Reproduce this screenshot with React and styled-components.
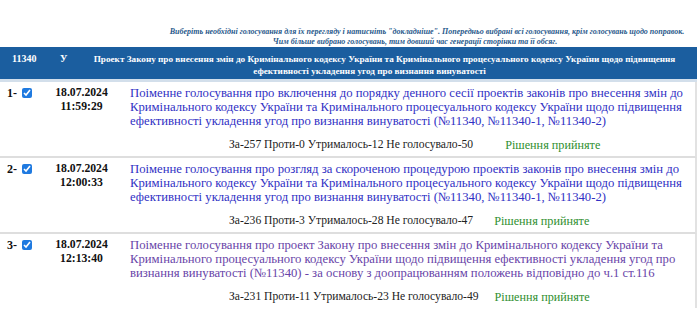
import React from 'react';
import styled, { createGlobalStyle } from 'styled-components';

const GlobalStyle = createGlobalStyle`
  body {
    margin: 0;
    background: #fff;
    font-family: "Liberation Serif", "Times New Roman", serif;
  }
`;

const votes = [
  {
    id: 1,
    date: '18.07.2024',
    time: '11:59:29',
    title:
      'Поіменне голосування про включення до порядку денного сесії проектів законів про внесення змін до Кримінального кодексу України та Кримінального процесуального кодексу України щодо підвищення ефективності укладення угод про визнання винуватості (№11340, №11340-1, №11340-2)',
    result: 'За-257 Проти-0 Утрималось-12 Не голосувало-50',
    gap: 32,
  },
  {
    id: 2,
    date: '18.07.2024',
    time: '12:00:33',
    title:
      'Поіменне голосування про розгляд за скороченою процедурою проектів законів про внесення змін до Кримінального кодексу України та Кримінального процесуального кодексу України щодо підвищення ефективності укладення угод про визнання винуватості (№11340, №11340-1, №11340-2)',
    result: 'За-236 Проти-3 Утрималось-28 Не голосувало-47',
    gap: 21,
  },
  {
    id: 3,
    date: '18.07.2024',
    time: '12:13:40',
    title:
      'Поіменне голосування про проект Закону про внесення змін до Кримінального кодексу України та Кримінального процесуального кодексу України щодо підвищення ефективності укладення угод про визнання винуватості (№11340) - за основу з доопрацюванням положень відповідно до ч.1 ст.116',
    result: 'За-231 Проти-11 Утрималось-23 Не голосувало-49',
    gap: 16,
    visited: true,
  },
];

const App = () => (
  <Page>
    <GlobalStyle />
    <Hint>
      <HintLine>
        Виберіть необхідні голосування для їх перегляду і натисніть "докладніше". Попередньо вибрані всі
        голосування, крім голосувань щодо поправок.
      </HintLine>
      <HintLine $shift={24}>
        Чим більше вибрано голосувань, тим довший час генерації сторінки та її обсяг.
      </HintLine>
    </Hint>

    <Head>
      <HeadCell>11340</HeadCell>
      <HeadCell>У</HeadCell>
      <HeadTitle>
        <TitleLine>
          Проект Закону про внесення змін до Кримінального кодексу України та Кримінального процесуального
          кодексу України щодо підвищення
        </TitleLine>
        <TitleLine $shift={30}>ефективності укладення угод про визнання винуватості</TitleLine>
      </HeadTitle>
    </Head>

    {votes.map(v => (
      <Row key={v.id}>
        <NumCell>
          <b>{v.id}-</b>
          <Check type="checkbox" defaultChecked />
        </NumCell>
        <DateCell>
          {v.date}
          <br />
          {v.time}
        </DateCell>
        <TextCell>
          <Link href="#" $visited={v.visited} onClick={e => e.preventDefault()}>
            {v.title}
          </Link>
          <Result $gap={v.gap}>
            <span>{v.result}</span>
            <Passed>Рішення прийняте</Passed>
          </Result>
        </TextCell>
      </Row>
    ))}
  </Page>
);

const Page = styled.div`
  width: 697px;
  padding-top: 27px;
`;

const Hint = styled.div`
  width: 526px;
  margin-left: 164px;
  text-align: center;
  font-size: 8px;
  line-height: 10px;
  font-style: italic;
  font-weight: bold;
  color: #2a5a8c;
`;

const HintLine = styled.div`
  white-space: nowrap;
  padding-right: ${p => p.$shift || 0}px;
`;

const Head = styled.div`
  display: grid;
  grid-template-columns: 48px 36px 1fr;
  align-items: start;
  background: #1b5e9f;
  color: #fff;
  font-size: 10px;
  line-height: 12px;
  font-weight: bold;
  padding: 6px 0 2px;
  border-bottom: 3px solid #d3dfeb;
`;

const HeadCell = styled.div`
  padding-left: 12px;
`;

const HeadTitle = styled.div`
  text-align: center;
  padding-right: 12px;
  font-size: 9.2px;
`;

const TitleLine = styled.div`
  white-space: nowrap;
  padding-right: ${p => p.$shift || 0}px;
`;

const Row = styled.div`
  display: grid;
  grid-template-columns: 45px 73px 1fr;
  align-items: start;
  padding: 4px 0;
  font-size: 12.7px;
  line-height: 14px;
  border-right: 2px solid #e2e2e2;
  border-bottom: 2px solid #dedede;

  &:last-child {
    border-bottom: none;
  }
`;

const NumCell = styled.div`
  display: flex;
  align-items: flex-start;
  gap: 5px;
  padding-left: 7px;
  font-size: 12px;
  color: #111;
`;

const Check = styled.input`
  width: 10px;
  height: 10px;
  margin: 2px 0 0;
  accent-color: #1f7ae0;
`;

const DateCell = styled.div`
  text-align: center;
  font-size: 11.7px;
  font-weight: bold;
  color: #111;
`;

const TextCell = styled.div`
  padding: 0 10px 0 12px;
`;

const Link = styled.a`
  color: ${p => (p.$visited ? '#6844a8' : '#3030c4')};
  text-decoration: none;
`;

const Result = styled.div`
  display: flex;
  gap: ${p => p.$gap}px;
  margin-top: 10px;
  padding-left: 99px;
  font-size: 11.6px;
  color: #222;
`;

const Passed = styled.span`
  color: #2f8f2f;
  font-size: 12.2px;
`;

export default App;
